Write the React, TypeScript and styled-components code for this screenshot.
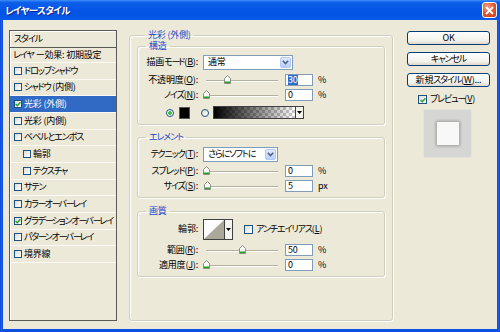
import React from 'react'
import styled, { createGlobalStyle } from 'styled-components'

const GlobalStyle = createGlobalStyle`
  html, body { margin: 0; padding: 0; }
  body {
    width: 500px;
    height: 332px;
    overflow: hidden;
    background: #ece9d8;
    font-family: "Noto Sans CJK JP", "Noto Sans", sans-serif;
    font-size: 9px;
    line-height: 1.15;
    letter-spacing: -0.2px;
    font-feature-settings: "palt";
    color: #000;
  }
  * { box-sizing: border-box; }
`

// kana in the old UI font are narrower than Noto's, so tighten them
const Kana = styled.span<{ $bar?: boolean }>`
  letter-spacing: ${p => (p.$bar ? -2.2 : -1.1)}px;
`

function Jp({ children }: { children: string }) {
  const parts: { text: string; kind: 'bar' | 'kana' | 'other' }[] = []
  for (const ch of children) {
    const kind = ch === 'ー' ? 'bar' : /[\u3041-\u30fe]/.test(ch) ? 'kana' : 'other'
    const last = parts[parts.length - 1]
    if (last && last.kind === kind) last.text += ch
    else parts.push({ text: ch, kind })
  }
  return (
    <>
      {parts.map((p, i) =>
        p.kind === 'other' ? (
          <React.Fragment key={i}>{p.text}</React.Fragment>
        ) : (
          <Kana key={i} $bar={p.kind === 'bar'}>{p.text}</Kana>
        )
      )}
    </>
  )
}

const Window = styled.div`
  width: 500px;
  height: 332px;
  display: flex;
  flex-direction: column;
  background: linear-gradient(to right, #0a3fd4, #1a5ee8 1px, #0b4fe0 3px, #0b4fe0 497px, #1a5ee8 499px, #0a3fd4);
`

const TitleBar = styled.div`
  height: 20px;
  flex: none;
  display: flex;
  align-items: center;
  justify-content: space-between;
  padding: 0 3px 0 5px;
  background: linear-gradient(to bottom, #3d8ef8 0%, #0d60ea 12%, #0556e6 45%, #0454e4 75%, #0a5ce9 100%);
`

const Title = styled.span`
  color: #fff;
  font-weight: bold;
  font-size: 9.5px;
  letter-spacing: -0.7px;
  text-shadow: 1px 1px 0 #0a2596;
`

const CloseButton = styled.div`
  width: 15px;
  height: 16px;
  border: 1px solid #fff;
  border-radius: 3px;
  background: radial-gradient(circle at 35% 30%, #f4a083, #e0542c 55%, #c63c14);
  display: flex;
  align-items: center;
  justify-content: center;
`

const Body = styled.div`
  flex: 1;
  margin: 0 3px 3px;
  background: #ece9d8;
  display: flex;
  padding: 10px 7px 8px 6px;
`

/* ---------- left list ---------- */

const StyleList = styled.div`
  width: 108px;
  flex: none;
  display: flex;
  flex-direction: column;
  border: 1px solid #5a5a55;
  box-shadow: inset 1px 1px 0 #fff;
`

const ListHeader = styled.div`
  height: 17px;
  flex: none;
  display: flex;
  align-items: center;
  padding-left: 4px;
  border-bottom: 1px solid #5a5a55;
`

const ListItem = styled.div<{ $selected?: boolean; $indent?: boolean }>`
  height: 16.67px;
  flex: none;
  display: flex;
  align-items: center;
  gap: 2px;
  padding-left: ${p => (p.$indent ? 13 : 4)}px;
  border-bottom: 1px solid #fbfaf4;
  background: ${p => (p.$selected ? '#316ac5' : 'transparent')};
  color: ${p => (p.$selected ? '#fff' : '#000')};
  white-space: nowrap;
`

const PresetItem = styled(ListItem)`
  height: 15px;
  padding-left: 3px;
`

const CheckBox = styled.span<{ $size?: number }>`
  width: ${p => p.$size ?? 8}px;
  height: ${p => p.$size ?? 8}px;
  flex: none;
  border: 1px solid #1c5180;
  background: linear-gradient(135deg, #dcdcd5, #fff);
  display: inline-flex;
  align-items: center;
  justify-content: center;
`

function Check({ checked, size }: { checked?: boolean; size?: number }) {
  return (
    <CheckBox $size={size}>
      {checked && (
        <svg width="6" height="6" viewBox="0 0 6 6">
          <path d="M0.6 3 L2.3 4.7 L5.4 1.2" fill="none" stroke="#21a121" strokeWidth="1.4" />
        </svg>
      )}
    </CheckBox>
  )
}

/* ---------- group boxes ---------- */

const Group = styled.fieldset<{ $mt?: number; $pt?: number }>`
  margin: ${p => p.$mt ?? 0}px 0 0;
  min-width: 0;
  padding: ${p => p.$pt ?? 5}px 0 5px;
  border: 1px solid #d0cfbf;
  border-radius: 3px;
  box-shadow: inset 1px 1px 0 #fff, 1px 1px 0 #fff;
`

const OuterGroup = styled(Group)`
  width: 264px;
  flex: none;
  margin-left: 12px;
  padding: 0 7px;
`

const Legend = styled.legend`
  margin-left: 8px;
  padding: 0 3px;
  height: 10px;
  line-height: 10px;
  color: #1a46c8;
`

const Row = styled.div<{ $mt?: number; $h?: number; $pl?: number }>`
  display: flex;
  align-items: center;
  height: ${p => p.$h ?? 12}px;
  margin-top: ${p => p.$mt ?? 0}px;
  padding-left: ${p => p.$pl ?? 0}px;
  white-space: nowrap;
`

const Label = styled.span`
  width: 60px;
  flex: none;
  text-align: right;
  margin-right: 5px;
`

const Combo = styled.div<{ $w: number }>`
  width: ${p => p.$w}px;
  height: 15px;
  flex: none;
  display: flex;
  align-items: center;
  justify-content: space-between;
  border: 1px solid #7f9db9;
  background: #fff;
  padding: 1px 1px 1px 4px;
`

const ComboButton = styled.span`
  width: 11px;
  height: 100%;
  display: flex;
  align-items: center;
  justify-content: center;
  border: 1px solid #b2c8f7;
  border-radius: 2px;
  background: linear-gradient(#e2ebfe, #b9d0fb);
`

function Select({ value, width }: { value: string; width: number }) {
  return (
    <Combo $w={width}>
      <span><Jp>{value}</Jp></span>
      <ComboButton>
        <svg width="7" height="5" viewBox="0 0 7 5">
          <path d="M0.8 0.8 L3.5 3.6 L6.2 0.8" fill="none" stroke="#4d6185" strokeWidth="1.6" />
        </svg>
      </ComboButton>
    </Combo>
  )
}

const SliderWrap = styled.div`
  position: relative;
  width: 78px;
  height: 12px;
  flex: none;
`

const Track = styled.div`
  margin: 6px 3px 0;
  height: 2px;
  border-top: 1px solid #b3b09e;
  border-bottom: 1px solid #fff;
`

const Thumb = styled.svg`
  position: absolute;
  top: 1px;
`

function Slider({ pct }: { pct: number }) {
  return (
    <SliderWrap>
      <Track />
      <Thumb width="7" height="9" viewBox="0 0 7 9" style={{ left: 3 + pct * 72 - 3.5 }}>
        <path d="M0.5 8.5 V3.5 L3.5 0.5 L6.5 3.5 V8.5 Z" fill="#fbfbf8" stroke="#8c8c86" />
        <rect x="1" y="6.5" width="5" height="1.5" fill="#21a121" />
      </Thumb>
    </SliderWrap>
  )
}

const Field = styled.div`
  width: 28px;
  height: 12px;
  flex: none;
  margin-left: 4px;
  border: 1px solid #7f9db9;
  background: #fff;
  padding-left: 2px;
  display: flex;
  align-items: center;
  line-height: 10px;
`

const Highlight = styled.span`
  background: #316ac5;
  color: #fff;
`

const Unit = styled.span`
  margin-left: 5px;
`

function Mnemonic({ text, k, colon = true }: { text: string; k: string; colon?: boolean }) {
  return (
    <>
      <Jp>{text}</Jp>(<u>{k}</u>){colon ? ':' : ''}
    </>
  )
}

function SliderRow({ label, pct, value, unit, mt, selected }: {
  label: React.ReactNode; pct: number; value: string; unit: string; mt?: number; selected?: boolean
}) {
  return (
    <Row $mt={mt}>
      <Label>{label}</Label>
      <Slider pct={pct} />
      <Field>{selected ? <Highlight>{value}</Highlight> : value}</Field>
      <Unit>{unit}</Unit>
    </Row>
  )
}

const Radio = styled.span<{ $on?: boolean }>`
  width: 8px;
  height: 8px;
  flex: none;
  border-radius: 50%;
  border: 1px solid #1c5180;
  background: ${p => (p.$on ? 'radial-gradient(circle, #3fc13f 0 1.6px, #fff 1.8px)' : 'linear-gradient(135deg, #dcdcd5, #fff)')};
`

const ColorSwatch = styled.span`
  width: 11px;
  height: 12px;
  flex: none;
  margin: 0 11px 0 5px;
  background: #000;
  border: 1px solid #555;
`

const GradientSwatch = styled.div`
  width: 91px;
  height: 13px;
  flex: none;
  margin-left: 4px;
  display: flex;
  border: 1px solid #404040;
`

const GradientFill = styled.span`
  flex: 1;
  background:
    linear-gradient(to right, #000, rgba(0, 0, 0, 0)),
    repeating-conic-gradient(#c8c8c8 0 25%, #fff 0 50%) 0 0 / 6px 6px;
`

const MiniArrow = styled.span`
  width: 8px;
  flex: none;
  display: flex;
  align-items: center;
  justify-content: center;
  border-left: 1px solid #404040;
  background: #f4f3ee;
`

function ArrowGlyph() {
  return (
    <svg width="5" height="3" viewBox="0 0 5 3">
      <path d="M0 0 H5 L2.5 3 Z" fill="#000" />
    </svg>
  )
}

const ContourSwatch = styled.div`
  width: 30px;
  height: 21px;
  flex: none;
  display: flex;
  border: 1px solid #404040;
  background: #fff;
`

const ContourFill = styled.svg`
  flex: 1;
  height: 100%;
`

const CheckLabel = styled.span<{ $ml?: number }>`
  display: inline-flex;
  align-items: center;
  gap: 3px;
  margin-left: ${p => p.$ml ?? 0}px;
  white-space: nowrap;
`

/* ---------- right column ---------- */

const Side = styled.div`
  width: 83px;
  flex: none;
  margin-left: 14px;
  padding-top: 1px;
  display: flex;
  flex-direction: column;
`

const Button = styled.div<{ $mt?: number }>`
  height: 14px;
  margin-top: ${p => p.$mt ?? 0}px;
  border: 1px solid #003c74;
  border-radius: 3px;
  background: linear-gradient(#ffffff, #f3f2ec 70%, #dcd8cc);
  display: flex;
  align-items: center;
  justify-content: center;
  white-space: nowrap;
`

const PreviewToggle = styled(CheckLabel)`
  margin: 8px 0 0 11px;
  height: 9px;
`

const PreviewBox = styled.div`
  width: 49px;
  height: 49px;
  margin: 5px 0 0 16px;
  background: #d6d6d4;
  border: 1px solid #e4e3dc;
  display: flex;
  align-items: center;
  justify-content: center;
`

const PreviewSquare = styled.div`
  width: 22px;
  height: 23px;
  background: #f8f8f8;
  box-shadow: 0 0 3px 1px rgba(0, 0, 0, 0.28);
`

const effects = [
  { label: 'ドロップシャドウ' },
  { label: 'シャドウ (内側)' },
  { label: '光彩 (外側)', checked: true, selected: true },
  { label: '光彩 (内側)' },
  { label: 'ベベルとエンボス' },
  { label: '輪郭', indent: true },
  { label: 'テクスチャ', indent: true },
  { label: 'サテン' },
  { label: 'カラーオーバーレイ' },
  { label: 'グラデーションオーバーレイ', checked: true },
  { label: 'パターンオーバーレイ' },
  { label: '境界線' },
]

export default function App() {
  return (
    <>
      <GlobalStyle />
      <Window>
        <TitleBar>
          <Title>レイヤースタイル</Title>
          <CloseButton>
            <svg width="9" height="9" viewBox="0 0 9 9">
              <path d="M1 1 L8 8 M8 1 L1 8" stroke="#fff" strokeWidth="1.8" />
            </svg>
          </CloseButton>
        </TitleBar>
        <Body>
          <StyleList>
            <ListHeader><Jp>スタイル</Jp></ListHeader>
            <PresetItem><Jp>レイヤー効果: 初期設定</Jp></PresetItem>
            {effects.map(e => (
              <ListItem key={e.label} $selected={e.selected} $indent={e.indent}>
                <Check checked={e.checked} />
                <span><Jp>{e.label}</Jp></span>
              </ListItem>
            ))}
          </StyleList>

          <OuterGroup>
            <Legend>光彩 (外側)</Legend>

            <Group $mt={1} $pt={4}>
              <Legend>構造</Legend>
              <Row $h={15}>
                <Label><Mnemonic text="描画モード" k="B" /></Label>
                <Select value="通常" width={90} />
              </Row>
              <SliderRow mt={4} label={<Mnemonic text="不透明度" k="O" />} pct={0.3} value="30" unit="%" selected />
              <SliderRow mt={3} label={<Mnemonic text="ノイズ" k="N" />} pct={0} value="0" unit="%" />
              <Row $mt={5} $h={13} $pl={28}>
                <Radio $on />
                <ColorSwatch />
                <Radio />
                <GradientSwatch>
                  <GradientFill />
                  <MiniArrow><ArrowGlyph /></MiniArrow>
                </GradientSwatch>
              </Row>
            </Group>

            <Group $mt={7}>
              <Legend><Jp>エレメント</Jp></Legend>
              <Row $h={15}>
                <Label><Mnemonic text="テクニック" k="T" /></Label>
                <Select value="さらにソフトに" width={75} />
              </Row>
              <SliderRow mt={3} label={<Mnemonic text="スプレッド" k="P" />} pct={0} value="0" unit="%" />
              <SliderRow mt={3} label={<Mnemonic text="サイズ" k="S" />} pct={0.02} value="5" unit="px" />
            </Group>

            <Group $mt={8}>
              <Legend>画質</Legend>
              <Row $h={21} $mt={-2}>
                <Label>輪郭:</Label>
                <ContourSwatch>
                  <ContourFill viewBox="0 0 22 19" preserveAspectRatio="none">
                    <path d="M0 19 L22 0 V19 Z" fill="#aba89a" />
                  </ContourFill>
                  <MiniArrow><ArrowGlyph /></MiniArrow>
                </ContourSwatch>
                <CheckLabel $ml={11}>
                  <Check size={9} />
                  <span><Mnemonic text="アンチエイリアス" k="L" colon={false} /></span>
                </CheckLabel>
              </Row>
              <SliderRow mt={4} label={<Mnemonic text="範囲" k="R" />} pct={0.5} value="50" unit="%" />
              <SliderRow mt={3} label={<Mnemonic text="適用度" k="J" />} pct={0} value="0" unit="%" />
            </Group>
          </OuterGroup>

          <Side>
            <Button>OK</Button>
            <Button $mt={7}><Jp>キャンセル</Jp></Button>
            <Button $mt={7}><Mnemonic text="新規スタイル" k="W" colon={false} />...</Button>
            <PreviewToggle>
              <Check checked size={9} />
              <span><Mnemonic text="プレビュー" k="V" colon={false} /></span>
            </PreviewToggle>
            <PreviewBox>
              <PreviewSquare />
            </PreviewBox>
          </Side>
        </Body>
      </Window>
    </>
  )
}
